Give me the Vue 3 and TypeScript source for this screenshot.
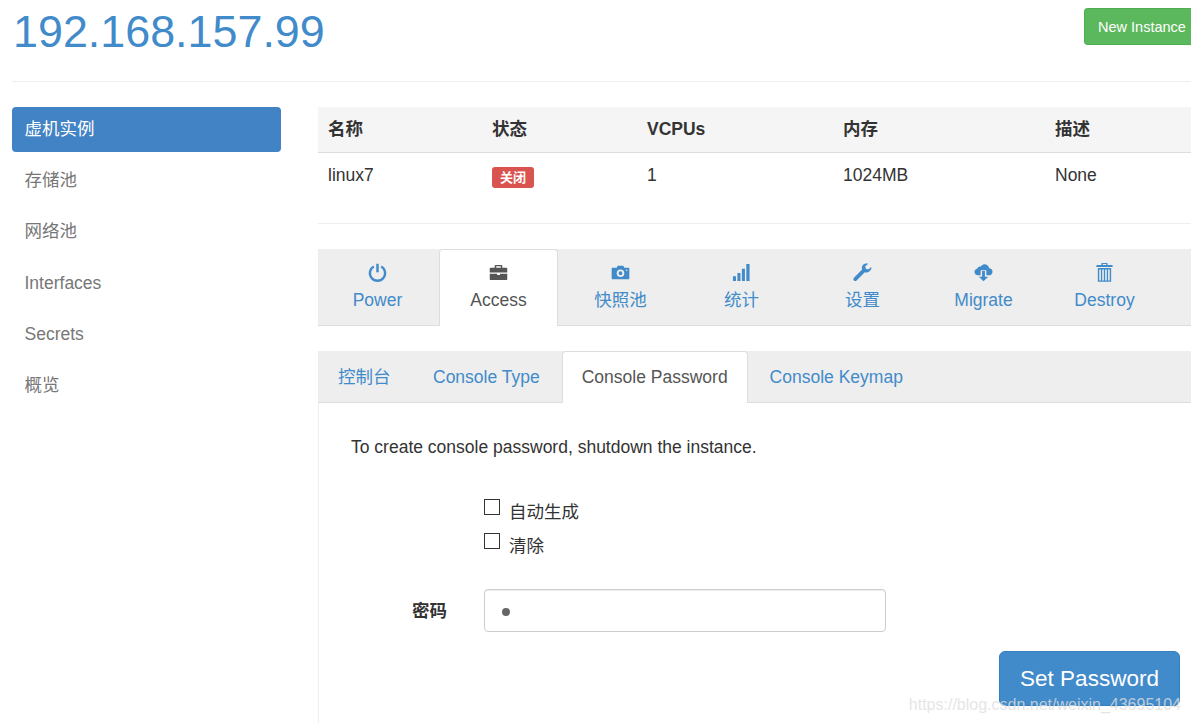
<script setup lang="ts">
const nav: string[] = ['虚机实例', '存储池', '网络池', 'Interfaces', 'Secrets', '概览']
const heads: string[] = ['名称', '状态', 'VCPUs', '内存', '描述']
const subTabs = [
  { label: '控制台', active: false },
  { label: 'Console Type', active: false },
  { label: 'Console Password', active: true },
  { label: 'Console Keymap', active: false },
]
</script>

<template>
  <div class="page">
    <header class="top">
      <h1 class="title">192.168.157.99</h1>
      <button class="new-btn">New Instance</button>
    </header>
    <div class="columns">
      <nav class="side">
        <a v-for="(n, i) in nav" :key="n" class="side-item" :class="{ on: i === 0 }">{{ n }}</a>
      </nav>
      <main class="main">
        <table class="info">
          <thead>
            <tr>
              <th v-for="h in heads" :key="h">{{ h }}</th>
            </tr>
          </thead>
          <tbody>
            <tr>
              <td>linux7</td>
              <td class="status"><span class="badge">关闭</span></td>
              <td>1</td>
              <td>1024MB</td>
              <td>None</td>
            </tr>
          </tbody>
        </table>
        <hr class="rule" />
        <div class="tabs">
          <a class="tab">
            <svg class="ico" viewBox="0 0 20 20"><path d="M6.100 3.700a8 8 0 1 0 7.800 0" fill="none" stroke="currentColor" stroke-width="2.500" /><path d="M10 .8v9" fill="none" stroke="currentColor" stroke-width="2.600" /></svg>
            <span class="lbl">Power</span>
          </a>
          <a class="tab on">
            <svg class="ico" viewBox="0 0 20 20"><path fill="currentColor" d="M7 2h6a1 1 0 0 1 1 1v2h4.200a1 1 0 0 1 1 1v4H.800V6a1 1 0 0 1 1-1H6V3a1 1 0 0 1 1-1zm.6 1.400V5h4.800V3.400zM.800 11.200h7.700v1.300h3v-1.300h7.700V17a1 1 0 0 1-1 1H1.800a1 1 0 0 1-1-1z" /></svg>
            <span class="lbl">Access</span>
          </a>
          <a class="tab">
            <svg class="ico" viewBox="0 0 20 20"><path fill="currentColor" fill-rule="evenodd" d="M7 3h6l1 2h4.500a.8.8 0 0 1 .8.800v10.400a.8.8 0 0 1-.8.800H1.500a.8.8 0 0 1-.8-.8V5.800a.8.8 0 0 1 .8-.8H6zM10 6.800a4 4 0 1 0 0 8 4 4 0 0 0 0-8zm0 2a2 2 0 1 1 0 4 2 2 0 0 1 0-4zm6.500-2a.8.8 0 1 0 0 1.600.8.8 0 0 0 0-1.600z" /></svg>
            <span class="lbl">快照池</span>
          </a>
          <a class="tab">
            <svg class="ico" viewBox="0 0 20 20"><path fill="currentColor" d="M1 14h3.200v5H1zM5.700 10.500h3.200V19H5.700zM10.400 6h3.200v13h-3.200zM15.100 1h3.400v18h-3.400z" /></svg>
            <span class="lbl">统计</span>
          </a>
          <a class="tab">
            <svg class="ico" viewBox="0 0 20 20"><path fill="currentColor" d="M19.300 4.300l-3.200 2.600-2.600-.8-.6-2.700L16 .700c-2.200-.6-4.700 0-5.900 1.800-1 1.400-1 3-.5 4.400L1 15.500c-.8.800-.8 2 0 2.800.8.800 2 .8 2.800 0l8.600-8.600c1.500.6 3.300.4 4.700-.7 1.700-1.300 2.600-2.800 2.200-4.700z" /></svg>
            <span class="lbl">设置</span>
          </a>
          <a class="tab">
            <svg class="ico" viewBox="0 0 20 20"><path fill="currentColor" d="M11 1.200c2.600 0 4.700 1.800 5 4.200 1.800.3 3.500 1.400 3.500 3.700 0 2.300-1.800 3.900-4 3.900H13V7.500H7V13H4C2 13 .5 11.500.5 9.500c0-1.800 1.300-3.300 3-3.600C4 4.300 5.500 3.300 7 3.700 8 2.200 9.400 1.200 11 1.200z" /><path fill="currentColor" d="M8.500 8.500h3v6H15L10 19.200 5 14.500h3.500z" /></svg>
            <span class="lbl">Migrate</span>
          </a>
          <a class="tab">
            <svg class="ico" viewBox="0 1 20 20"><path fill="currentColor" fill-rule="evenodd" d="M7.800.600h4.400c.6 0 1 .4 1 1V3H17.600a1 1 0 0 1 1 1v1.300H1.400V4a1 1 0 0 1 1-1h4.400V1.600c0-.6.400-1 1-1zM8.200 2v1h3.600V2zM3 6.300h14v14.500H3zm1.500 1.600v11.400h1.700V7.900zm3.100 0v11.400h1.700V7.900zm3.100 0v11.400h1.700V7.900zm3.100 0v11.400h1.700V7.900z" /></svg>
            <span class="lbl">Destroy</span>
          </a>
        </div>
        <div class="subtabs">
          <a v-for="t in subTabs" :key="t.label" class="subtab" :class="{ on: t.active }">{{ t.label }}</a>
        </div>
        <section class="panel">
          <p class="hint">To create console password, shutdown the instance.</p>
          <div class="form">
            <div class="checks">
              <label class="check"><span class="box"></span><span>自动生成</span></label>
              <label class="check"><span class="box"></span><span>清除</span></label>
            </div>
            <div class="pw-row">
              <span class="pw-label">密码</span>
              <div class="pw-input"><span class="dot"></span></div>
            </div>
            <div class="actions">
              <button class="set-btn">Set Password</button>
            </div>
          </div>
        </section>
      </main>
    </div>
    <div class="mark">https://blog.csdn.net/weixin_43695104</div>
  </div>
</template>

<style>
html, body { margin: 0; padding: 0; overflow: hidden; background: #fff; }
</style>

<style scoped>
.page {
  position: relative;
  width: 1191px;
  height: 723px;
  overflow: hidden;
  box-sizing: border-box;
  padding-left: 12px;
  font-family: "Liberation Sans", "Noto Sans CJK SC", sans-serif;
  font-size: 17.500px;
  color: #333;
  background: #fff;
}
.top {
  display: flex;
  justify-content: space-between;
  align-items: flex-start;
  height: 81px;
  border-bottom: 1px solid #eee;
}
.title {
  margin: 6px 0 0 1px;
  font-size: 44.850px;
  line-height: 52px;
  font-weight: 400;
  color: #428bca;
}
.new-btn {
  margin-top: 8px;
  width: 107px;
  height: 37px;
  padding: 0 0 0 13px;
  text-align: left;
  white-space: nowrap;
  font: 14.500px "Liberation Sans", sans-serif;
  color: #fff;
  background: #5cb85c;
  border: 1px solid #4cae4c;
  border-right: 0;
  border-radius: 4px 0 0 4px;
}
.columns {
  display: flex;
  padding-top: 25px;
  gap: 37px;
}
.side {
  width: 269px;
  flex: none;
  display: flex;
  flex-direction: column;
  gap: 6.200px;
}
.side-item {
  height: 45px;
  line-height: 45px;
  padding-left: 12.500px;
  border-radius: 4px;
  color: #777;
}
.side-item.on {
  background: #4183c4;
  color: #fff;
}
.main {
  width: 873px;
  flex: none;
}
.info {
  width: 873px;
  border-collapse: collapse;
  table-layout: fixed;
}
.info th {
  height: 45px;
  padding: 0 0 0 10px;
  text-align: left;
  font-weight: 700;
  line-height: 19px;
  background: #f5f5f5;
  border-bottom: 1px solid #ddd;
}
.info th:nth-child(1) { width: 154px; }
.info th:nth-child(2) { width: 145px; }
.info th:nth-child(3) { width: 186px; }
.info th:nth-child(4) { width: 202px; }
.info td {
  height: 43px;
  padding: 0 0 2px 10px;
  line-height: 20px;
  vertical-align: middle;
}
.info td.status {
  height: 41px;
  padding: 4px 0 0 10px;
}
.badge {
  display: inline-block;
  width: 42px;
  height: 21px;
  line-height: 21px;
  text-align: center;
  font-size: 13px;
  font-weight: 700;
  color: #fff;
  background: #d9534f;
  border-radius: 3px;
  vertical-align: middle;
}
.rule {
  margin: 25px 0;
  border: 0;
  border-top: 1px solid #eee;
}
.tabs {
  display: flex;
  height: 76px;
  background: #eee;
  border-bottom: 1px solid #ddd;
}
.tab {
  width: 121px;
  height: 76px;
  box-sizing: border-box;
  padding-top: 14px;
  display: flex;
  flex-direction: column;
  align-items: center;
  color: #428bca;
  flex: none;
}
.tab:first-child { width: 119px; }
.ico { width: 19px; height: 19px; display: block; margin-bottom: 7.500px; }
.lbl { line-height: 20px; }
.tab.on {
  width: 119px;
  margin: 0 2px;
  height: 77px;
  padding-top: 13px;
  color: #555;
  background: #fff;
  border: 1px solid #ddd;
  border-bottom: 0;
  border-radius: 4px 4px 0 0;
}
.subtabs {
  display: flex;
  margin-top: 25px;
  height: 51px;
  background: #eee;
  border-bottom: 1px solid #ddd;
}
.subtab {
  height: 51px;
  line-height: 52px;
  padding: 0 20px;
  margin-right: 2px;
  color: #428bca;
  white-space: nowrap;
}
.subtab:first-child { padding-right: 20.500px; }
.subtab.on {
  height: 52px;
  box-sizing: border-box;
  padding: 0 19px;
  line-height: 50px;
  color: #555;
  background: #fff;
  border: 1px solid #ddd;
  border-bottom: 0;
  border-radius: 4px 4px 0 0;
}
.panel {
  border-left: 1px solid #eee;
  height: 320px;
  box-sizing: border-box;
  padding: 34px 0 0 32px;
}
.hint {
  margin: 0;
  line-height: 20px;
}
.form {
  margin-top: 42px;
}
.checks {
  margin-left: 133px;
  display: flex;
  flex-direction: column;
  gap: 9px;
}
.check {
  display: flex;
  align-items: flex-start;
  gap: 9px;
  height: 25px;
  line-height: 26px;
}
.box {
  width: 14px;
  height: 14px;
  border: 1px solid #333;
  display: block;
}
.pw-row {
  display: flex;
  align-items: center;
  margin-top: 31px;
}
.pw-label {
  width: 133px;
  padding-left: 61px;
  line-height: 40px;
  box-sizing: border-box;
  font-weight: 700;
}
.pw-input {
  width: 402px;
  height: 43px;
  box-sizing: border-box;
  padding: 2px 0 0 17px;
  display: flex;
  align-items: center;
  border: 1px solid #ccc;
  border-radius: 4px;
  box-shadow: inset 0 1px 1px rgba(0, 0, 0, 0.075);
}
.dot {
  width: 8px;
  height: 8px;
  border-radius: 50%;
  background: #666;
}
.actions {
  display: flex;
  justify-content: flex-end;
  margin-top: 19px;
  padding-right: 11px;
}
.set-btn {
  width: 181px;
  height: 55px;
  font: 22.500px "Liberation Sans", sans-serif;
  color: #fff;
  background: #428bca;
  border: 1px solid #357ebd;
  border-radius: 6px;
}
.mark {
  position: absolute;
  right: 10px;
  top: 696px;
  font-size: 16px;
  line-height: 18px;
  color: rgba(222, 222, 222, 0.8);
}
</style>
